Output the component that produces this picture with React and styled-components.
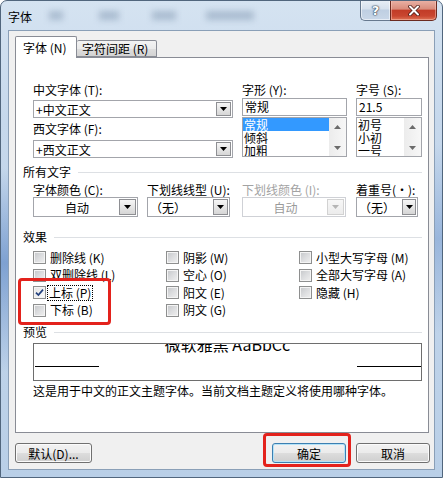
import React from "react";
import styled, { createGlobalStyle } from "styled-components";

const FONT = `"Noto Sans CJK SC", "Noto Sans", "DejaVu Sans", sans-serif`;

const GlobalStyle = createGlobalStyle`
  html, body { margin: 0; padding: 0; background: #ffffff; }
  body { font-family: ${FONT}; }
  *, *::before, *::after { box-sizing: border-box; }
`;

const Frame = styled.div`
  position: relative;
  width: 443px;
  height: 478px;
  display: flex;
  flex-direction: column;
  padding: 0 7px 7px;
  border: 1px solid #51667d;
  border-radius: 7px 7px 0 0;
  overflow: hidden;
  font-family: ${FONT};
  font-size: 12px;
  color: #000;
  background:
    linear-gradient(180deg, rgba(60,110,185,0) 35%, rgba(60,110,185,0.5) 55%, rgba(60,110,185,0) 78%) left top / 8px 100% no-repeat,
    linear-gradient(180deg, rgba(60,110,185,0) 30%, rgba(60,110,185,0.3) 50%, rgba(60,110,185,0) 70%) right top / 8px 100% no-repeat,
    linear-gradient(180deg, #d5e3f1 0%, #c6d8ec 25%, #b9cfe7 100%);
`;

const TitleBar = styled.div`
  display: flex;
  align-items: flex-start;
  height: 29px;
  flex: none;
`;

const TitleText = styled.div`
  margin-top: 9px;
  height: 14px;
  line-height: 14px;
  white-space: nowrap;
`;

const Blobs = styled.div`
  display: flex;
  margin-top: 10px;
  margin-left: 17px;
`;

const Blob = styled.span`
  display: block;
  width: ${(p) => p.$w}px;
  margin-left: ${(p) => p.$ml}px;
  height: 9px;
  background: rgba(95, 120, 150, 0.35);
  filter: blur(3px);
`;

const Caption = styled.div`
  display: flex;
  margin-left: auto;
  margin-right: -2px;
  margin-top: -1px;
`;

const HelpBtn = styled.div`
  width: 30px;
  height: 21px;
  display: flex;
  align-items: center;
  justify-content: center;
  border: 1px solid #67798f;
  border-top: none;
  border-right: none;
  border-radius: 0 0 0 5px;
  background: linear-gradient(180deg, #e9eff6 0%, #d6e1ed 45%, #bfcfe2 50%, #c9d7e8 100%);
  box-shadow: inset 0 0 0 1px rgba(255, 255, 255, 0.55);
  color: #fff;
  font-family: "DejaVu Sans", sans-serif;
  font-weight: bold;
  font-size: 13px;
  line-height: 1;
  text-shadow: 0 0 1px #2d3c50, 0 0 1px #2d3c50, 0 0 2px #2d3c50;
`;

const CloseBtn = styled.div`
  width: 47px;
  height: 21px;
  display: flex;
  align-items: center;
  justify-content: center;
  border: 1px solid #6b2a20;
  border-top: none;
  border-radius: 0 0 5px 0;
  background: linear-gradient(180deg, #ebb4a8 0%, #d98c7c 45%, #c23c27 52%, #c94630 80%, #de7356 100%);
  box-shadow: inset 0 0 0 1px rgba(255, 210, 200, 0.45);
`;

const Client = styled.div`
  flex: none;
  height: 440px;
  display: flex;
  flex-direction: column;
  padding: 5px 5px 0 6px;
  background: #f0f0f0;
  border: 1px solid #8a9fb7;
`;

const TabRow = styled.div`
  position: relative;
  z-index: 1;
  display: flex;
  align-items: flex-end;
  height: 21px;
`;

const Tab = styled.div`
  height: ${(p) => (p.$active ? 22 : 17)}px;
  margin-bottom: ${(p) => (p.$active ? -1 : 0)}px;
  width: ${(p) => p.$w}px;
  padding-left: ${(p) => (p.$active ? 7 : 5)}px;
  display: flex;
  align-items: center;
  white-space: nowrap;
  border: 1px solid #898c95;
  border-bottom: ${(p) => (p.$active ? "none" : "1px solid #898c95")};
  border-left: ${(p) => (p.$active ? "1px solid #898c95" : "none")};
  border-radius: 2px 2px 0 0;
  background: ${(p) =>
    p.$active
      ? "#ffffff"
      : "linear-gradient(180deg, #f3f3f3 0%, #ebebeb 50%, #dedede 51%, #d3d3d3 100%)"};
`;

const Panel = styled.div`
  position: relative;
  height: 376px;
  flex: none;
  background: #fff;
  border: 1px solid #898c95;
  padding: 25px 6px 0 7px;
`;

const TopGrid = styled.div`
  margin-left: 10px;
  display: grid;
  grid-template-columns: 200px 105px 66px;
  column-gap: 9px;
  align-items: start;
`;

const Stack = styled.div`
  display: flex;
  flex-direction: column;
`;

const Label = styled.div`
  height: 14px;
  line-height: 14px;
  white-space: nowrap;
  color: ${(p) => (p.$disabled ? "#a3a3a3" : "#000")};
  margin-top: ${(p) => p.$mt || 0}px;
  margin-bottom: ${(p) => p.$mb || 0}px;
`;

const Combo = styled.div`
  display: flex;
  width: ${(p) => (p.$w ? `${p.$w}px` : "100%")};
  height: ${(p) => p.$h}px;
  border: 1px solid ${(p) => (p.$disabled ? "#cfd1d6" : "#a3a5ab")};
  background: #fff;
`;

const ComboText = styled.div`
  flex: 1;
  min-width: 0;
  padding-left: 2px;
  display: flex;
  align-items: center;
  justify-content: ${(p) => (p.$center ? "center" : "flex-start")};
  white-space: nowrap;
  color: ${(p) => (p.$disabled ? "#9a9a9a" : "#000")};
`;

const DropBtn = styled.div`
  flex: none;
  width: ${(p) => p.$w}px;
  margin: 1px;
  display: flex;
  align-items: center;
  justify-content: center;
  border: 1px solid ${(p) => (p.$disabled ? "#d2d2d2" : "#8e8f93")};
  background: ${(p) =>
    p.$disabled
      ? "linear-gradient(180deg, #f7f7f7, #ececec)"
      : "linear-gradient(180deg, #f6f6f6 0%, #e6e6e6 50%, #d6d6d6 100%)"};
`;

const TextBox = styled.div`
  height: 18px;
  border: 1px solid #a3a5ab;
  background: #fff;
  padding-left: 2px;
  line-height: 16px;
  white-space: nowrap;
`;

const ListBox = styled.div`
  display: flex;
  height: 40px;
  margin-top: 1px;
  border: 1px solid #a3a5ab;
  background: #fff;
  overflow: hidden;
`;

const ListItems = styled.div`
  flex: 1;
  display: flex;
  flex-direction: column;
  overflow: hidden;
`;

const ListItem = styled.div`
  flex: none;
  height: 13px;
  line-height: 13px;
  padding-left: 1px;
  white-space: nowrap;
  background: ${(p) => (p.$selected ? "#3399ff" : "transparent")};
  color: ${(p) => (p.$selected ? "#fff" : "#000")};
`;

const ScrollBar = styled.div`
  flex: none;
  width: 17px;
  display: flex;
  flex-direction: column;
  justify-content: space-between;
  background: linear-gradient(90deg, #ececec 0%, #f7f7f7 100%);
`;

const ScrollBtn = styled.div`
  height: 17px;
  display: flex;
  align-items: center;
  justify-content: center;
`;

const SectionHead = styled.div`
  display: flex;
  align-items: center;
  height: 14px;
  line-height: 14px;
  margin-top: ${(p) => p.$mt}px;
  white-space: nowrap;
`;

const Rule = styled.div`
  flex: 1;
  height: 1px;
  margin-left: 7px;
  background: #dde0e4;
`;

const Row2Grid = styled.div`
  margin-left: 10px;
  margin-top: 4px;
  display: grid;
  grid-template-columns: 114px 95px 114px 62px;
`;

const CheckGrid = styled.div`
  position: relative;
  margin-left: 10px;
  margin-top: 5px;
  display: grid;
  grid-template-columns: 133px 133px 1fr;
  grid-template-rows: repeat(4, 17.5px);
  grid-auto-flow: column;
`;

const CheckRow = styled.div`
  display: flex;
  align-items: center;
  white-space: nowrap;
`;

const Box = styled.span`
  flex: none;
  width: 13px;
  height: 13px;
  margin-right: 3px;
  display: flex;
  align-items: center;
  justify-content: center;
  border: 1px solid #8e8f8f;
  background: ${(p) =>
    p.$checked
      ? "linear-gradient(135deg, #e4e4e4 0%, #fbfbfb 100%)"
      : "linear-gradient(135deg, #c4c6c9 0%, #dcdddf 50%, #f0f0f0 100%)"};
  box-shadow: inset 0 0 0 1px #f4f4f4;
`;

const CheckText = styled.span`
  height: 14px;
  line-height: 14px;
  padding: 0 1px;
  outline: ${(p) => (p.$focus ? "1px dotted #000" : "none")};
  margin-left: ${(p) => (p.$focus ? -1 : 0)}px;
`;

const Highlight = styled.div`
  position: absolute;
  left: ${(p) => p.$l}px;
  top: ${(p) => p.$t}px;
  width: ${(p) => p.$w}px;
  height: ${(p) => p.$h}px;
  border: 3px solid #e3221c;
  border-radius: 4px;
  pointer-events: none;
`;

const PreviewBox = styled.div`
  margin-left: 10px;
  margin-top: 4px;
  width: 389px;
  height: 38px;
  border: 1px solid #6e6e6e;
  overflow: hidden;
  display: flex;
  flex-direction: column;
`;

const PreviewText = styled.div`
  margin-top: -8px;
  height: 16px;
  line-height: 16px;
  font-size: 16px;
  text-align: center;
  white-space: nowrap;
`;

const BaseLines = styled.div`
  display: flex;
  justify-content: space-between;
  padding-left: 1px;
  margin-top: 14px;
`;

const BaseLine = styled.div`
  width: 64px;
  height: 1px;
  background: #000;
`;

const Description = styled.div`
  margin-left: 10px;
  margin-top: 3px;
  height: 14px;
  line-height: 14px;
  white-space: nowrap;
`;

const ButtonRow = styled.div`
  display: flex;
  align-items: center;
  margin-top: 10px;
  margin-right: -1px;
  height: 20px;
`;

const Spacer = styled.div`
  flex: 1;
`;

const Button = styled.div`
  position: relative;
  width: ${(p) => p.$w}px;
  height: 20px;
  margin-left: ${(p) => p.$ml || 0}px;
  display: flex;
  align-items: center;
  justify-content: center;
  white-space: nowrap;
  border: 1px solid ${(p) => (p.$default ? "#3c7fb1" : "#707070")};
  border-radius: 3px;
  background: linear-gradient(180deg, #f2f2f2 0%, #ebebeb 50%, #dddddd 51%, #cfcfcf 100%);
  box-shadow: inset 0 0 0 1px ${(p) => (p.$default ? "#b4e2f7" : "#fbfbfb")};
`;

const ButtonMark = styled.div`
  position: absolute;
  left: -10px;
  top: -11px;
  right: -6px;
  bottom: -5px;
  border: 3px solid #e3221c;
  border-radius: 4px;
  pointer-events: none;
`;

const Arrow = ({ disabled }) => (
  <svg width="7" height="4" viewBox="0 0 7 4">
    <path d="M0 0H7L3.5 4Z" fill={disabled ? "#b5b5b5" : "#000"} />
  </svg>
);

const ScrollArrow = ({ up }) => (
  <svg width="7" height="4" viewBox="0 0 7 4">
    <path d={up ? "M0 4H7L3.5 0Z" : "M0 0H7L3.5 4Z"} fill="#6b6b6b" />
  </svg>
);

const CheckMark = () => (
  <svg width="9" height="9" viewBox="0 0 9 9">
    <path d="M1 4.6L3.4 7L8 1.6" fill="none" stroke="#23417e" strokeWidth="1.7" />
  </svg>
);

const CloseGlyph = () => (
  <svg width="12" height="11" viewBox="0 0 12 11">
    <path d="M2 1.5L10 9.5M10 1.5L2 9.5" stroke="#4b1a14" strokeWidth="3.6" strokeLinecap="round" />
    <path d="M2 1.5L10 9.5M10 1.5L2 9.5" stroke="#ffffff" strokeWidth="2" strokeLinecap="round" />
  </svg>
);

const ComboBox = ({ text, w, h, center, disabled, btn = 15 }) => (
  <Combo $w={w} $h={h} $disabled={disabled}>
    <ComboText $center={center} $disabled={disabled}>{text}</ComboText>
    <DropBtn $w={btn} $disabled={disabled}>
      <Arrow disabled={disabled} />
    </DropBtn>
  </Combo>
);

const List = ({ items, selected }) => (
  <ListBox>
    <ListItems>
      {items.map((t) => (
        <ListItem key={t} $selected={t === selected}>{t}</ListItem>
      ))}
    </ListItems>
    <ScrollBar>
      <ScrollBtn><ScrollArrow up /></ScrollBtn>
      <ScrollBtn><ScrollArrow /></ScrollBtn>
    </ScrollBar>
  </ListBox>
);

const effects = [
  { t: "删除线 (K)" },
  { t: "双删除线 (L)" },
  { t: "上标 (P)", checked: true, focus: true },
  { t: "下标 (B)" },
  { t: "阴影 (W)" },
  { t: "空心 (O)" },
  { t: "阳文 (E)" },
  { t: "阴文 (G)" },
  { t: "小型大写字母 (M)" },
  { t: "全部大写字母 (A)" },
  { t: "隐藏 (H)" },
];

export default function App() {
  return (
    <>
      <GlobalStyle />
      <Frame>
        <TitleBar>
          <TitleText>字体</TitleText>
          <Blobs>
            <Blob $w={14} $ml={0} />
            <Blob $w={20} $ml={36} />
            <Blob $w={24} $ml={33} />
            <Blob $w={48} $ml={30} />
          </Blobs>
          <Caption>
            <HelpBtn>?</HelpBtn>
            <CloseBtn><CloseGlyph /></CloseBtn>
          </Caption>
        </TitleBar>

        <Client>
          <TabRow>
            <Tab $active $w={62}>字体 (N)</Tab>
            <Tab $w={80}>字符间距 (R)</Tab>
          </TabRow>

          <Panel>
            <TopGrid>
              <Stack>
                <Label $mb={3}>中文字体 (T):</Label>
                <ComboBox text="+中文正文" h={18} />
                <Label $mt={4} $mb={4}>西文字体 (F):</Label>
                <ComboBox text="+西文正文" h={18} />
              </Stack>
              <Stack>
                <Label $mb={1}>字形 (Y):</Label>
                <TextBox>常规</TextBox>
                <List items={["常规", "倾斜", "加粗"]} selected="常规" />
              </Stack>
              <Stack>
                <Label $mb={1}>字号 (S):</Label>
                <TextBox>21.5</TextBox>
                <List items={["初号", "小初", "一号"]} />
              </Stack>
            </TopGrid>

            <SectionHead $mt={7}>
              所有文字
              <Rule />
            </SectionHead>

            <Row2Grid>
              <Stack>
                <Label>字体颜色 (C):</Label>
                <ComboBox text="自动" w={105} h={20} center btn={17} />
              </Stack>
              <Stack>
                <Label>下划线线型 (U):</Label>
                <ComboBox text="（无）" w={83} h={20} btn={15} />
              </Stack>
              <Stack>
                <Label $disabled>下划线颜色 (I):</Label>
                <ComboBox text="自动" w={104} h={20} center disabled btn={17} />
              </Stack>
              <Stack>
                <Label>着重号(·):</Label>
                <ComboBox text="（无）" w={62} h={20} btn={14} />
              </Stack>
            </Row2Grid>

            <SectionHead $mt={13}>
              效果
              <Rule />
            </SectionHead>

            <CheckGrid>
              {effects.map((e) => (
                <CheckRow key={e.t}>
                  <Box $checked={e.checked}>{e.checked && <CheckMark />}</Box>
                  <CheckText $focus={e.focus}>{e.t}</CheckText>
                </CheckRow>
              ))}
              <Highlight $l={-15} $t={29} $w={93} $h={47} />
            </CheckGrid>

            <SectionHead $mt={6}>
              预览
              <Rule />
            </SectionHead>

            <PreviewBox>
              <PreviewText>微软雅黑 AaBbCc</PreviewText>
              <BaseLines>
                <BaseLine />
                <BaseLine />
              </BaseLines>
            </PreviewBox>

            <Description>这是用于中文的正文主题字体。当前文档主题定义将使用哪种字体。</Description>
          </Panel>

          <ButtonRow>
            <Button $w={77}>默认(D)...</Button>
            <Spacer />
            <Button $w={74} $default>
              确定
              <ButtonMark />
            </Button>
            <Button $w={74} $ml={10}>取消</Button>
          </ButtonRow>
        </Client>
      </Frame>
    </>
  );
}
